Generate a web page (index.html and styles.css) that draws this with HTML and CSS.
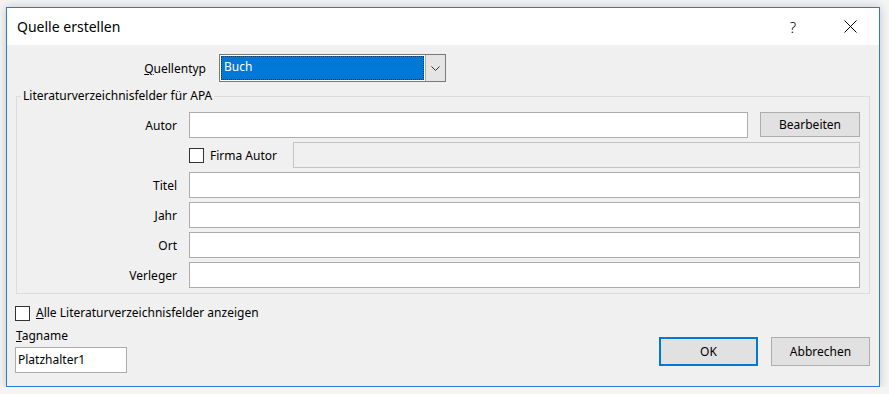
FILE: index.html
```html
<!DOCTYPE html>
<html lang="de">
<head>
<meta charset="UTF-8">
<meta name="viewport" content="width=device-width, initial-scale=1.0">
<title>Quelle erstellen</title>
<link rel="stylesheet" href="styles.css">
</head>
<body>

<div class="window">
  <div class="titlebar">
    <span class="title">Quelle erstellen</span>
    <span class="help">?</span>
    <svg class="close" width="13" height="13" viewBox="0 0 13 13">
      <path d="M0.5 0.5 L12.5 12.5 M12.5 0.5 L0.5 12.5" stroke="#000" stroke-width="1" fill="none"/>
    </svg>
  </div>

  <div class="content">
    <div class="type-row">
      <span class="type-label"><u>Q</u>uellentyp</span>
      <div class="select">
        <span class="select-value">Buch</span>
        <span class="select-arrow">
          <svg width="9" height="5" viewBox="0 0 9 5"><path d="M0.5 0.5 L4.5 4.5 L8.5 0.5" stroke="#333" fill="none"/></svg>
        </span>
      </div>
    </div>

    <fieldset class="group">
      <legend>Literaturverzeichnisfelder für APA</legend>
      <div class="fields">
        <span class="field-label">Autor</span>
        <div class="author-row">
          <div class="input"></div>
          <button class="btn edit-btn">Bearbeiten</button>
        </div>

        <span></span>
        <div class="corp-row">
          <span class="check"></span>
          <span class="corp-label">Firma Autor</span>
          <div class="input disabled"></div>
        </div>

        <span class="field-label">Titel</span>
        <div class="input"></div>

        <span class="field-label">Jahr</span>
        <div class="input"></div>

        <span class="field-label">Ort</span>
        <div class="input"></div>

        <span class="field-label">Verleger</span>
        <div class="input"></div>
      </div>
    </fieldset>

    <div class="bottom">
      <div class="bottom-left">
        <div class="check-row">
          <span class="check"></span>
          <span><u>A</u>lle Literaturverzeichnisfelder anzeigen</span>
        </div>
        <div class="tag-label"><u>T</u>agname</div>
        <div class="input tag-input">Platzhalter1</div>
      </div>
      <div class="buttons">
        <button class="btn dlg-btn ok">OK</button>
        <button class="btn dlg-btn">Abbrechen</button>
      </div>
    </div>
  </div>
</div>

</body>
</html>
```

FILE: styles.css
```css
body {
  margin: 0;
  background: #f4f4f4;
  font-family: "Noto Sans", sans-serif;
  font-size: 12px;
  color: #000;
}

.window {
  box-sizing: border-box;
  width: 874px;
  height: 380px;
  margin: 7px 0 0 6px;
  border: 1px solid #2a7dcc;
  background: #f0f0f0;
  box-shadow: 0 0 9px rgba(0, 0, 0, 0.2);
  display: flex;
  flex-direction: column;
}

.titlebar {
  height: 37px;
  background: #fff;
  display: flex;
  align-items: center;
  padding-left: 10px;
}
.title {
  flex: 1;
  font-size: 14px;
}
.help {
  width: 12px;
  text-align: center;
  font-size: 15px;
  font-weight: 300;
}
.close {
  margin-left: 45px;
  margin-right: 22px;
}

.content {
  flex: 1;
  display: flex;
  flex-direction: column;
}

.type-row {
  display: grid;
  grid-template-columns: 199px 227px;
  column-gap: 13px;
  align-items: center;
  margin-top: 9px;
}
.type-label {
  text-align: right;
}
.select {
  box-sizing: border-box;
  height: 28px;
  border: 1px solid #7a7a7a;
  background: #fff;
  display: flex;
}
.select-value {
  flex: 1;
  margin: 1px;
  background: #0078d7;
  color: #fff;
  padding-left: 3px;
  line-height: 22px;
  outline: 1px dotted #333;
  outline-offset: -1px;
}
.select-arrow {
  width: 19px;
  border-left: 1px solid #adadad;
  background: #e5e5e5;
  display: flex;
  align-items: center;
  justify-content: center;
}

.group {
  margin: 6px 9px 0 9px;
  border: 1px solid #dcdcdc;
  padding: 8px 9px 5px 0;
  min-width: 0;
}
.group legend {
  margin-left: 4px;
  padding: 0 2px;
  line-height: 16px;
}

.fields {
  display: grid;
  grid-template-columns: 160px 1fr;
  column-gap: 12px;
  row-gap: 4px;
  align-items: center;
}
.field-label {
  text-align: right;
}

.input {
  box-sizing: border-box;
  height: 26px;
  border: 1px solid #adadad;
  background: #fff;
}
.input.disabled {
  flex: 1;
  background: #f0f0f0;
  border-color: #c4c4c4;
}

.author-row {
  display: flex;
  gap: 12px;
}
.author-row .input {
  flex: 1;
}

.btn {
  box-sizing: border-box;
  font-family: inherit;
  font-size: 12px;
  color: #000;
  background: #e1e1e1;
  border: 1px solid #adadad;
  padding: 0;
}
.edit-btn {
  width: 100px;
  height: 25px;
}

.corp-row {
  display: flex;
  align-items: center;
}
.corp-label {
  margin-left: 6px;
  margin-right: 16px;
}

.check {
  box-sizing: border-box;
  width: 15px;
  height: 15px;
  border: 1px solid #333;
  background: #fff;
}

.bottom {
  flex: 1;
  display: flex;
  justify-content: space-between;
  align-items: flex-end;
  margin: 0 9px 13px 8px;
}
.check-row {
  display: flex;
  align-items: center;
  gap: 6px;
  line-height: 16px;
  margin-top: 11px;
}
.tag-label {
  line-height: 16px;
  margin-top: 7px;
  margin-left: 1px;
}
.tag-input {
  width: 112px;
  margin-top: 3px;
  padding-left: 2px;
  line-height: 24px;
}

.buttons {
  display: flex;
  gap: 13px;
  margin-bottom: 7px;
}
.dlg-btn {
  width: 99px;
  height: 29px;
}
.dlg-btn.ok {
  border: 2px solid #0078d7;
}
```
